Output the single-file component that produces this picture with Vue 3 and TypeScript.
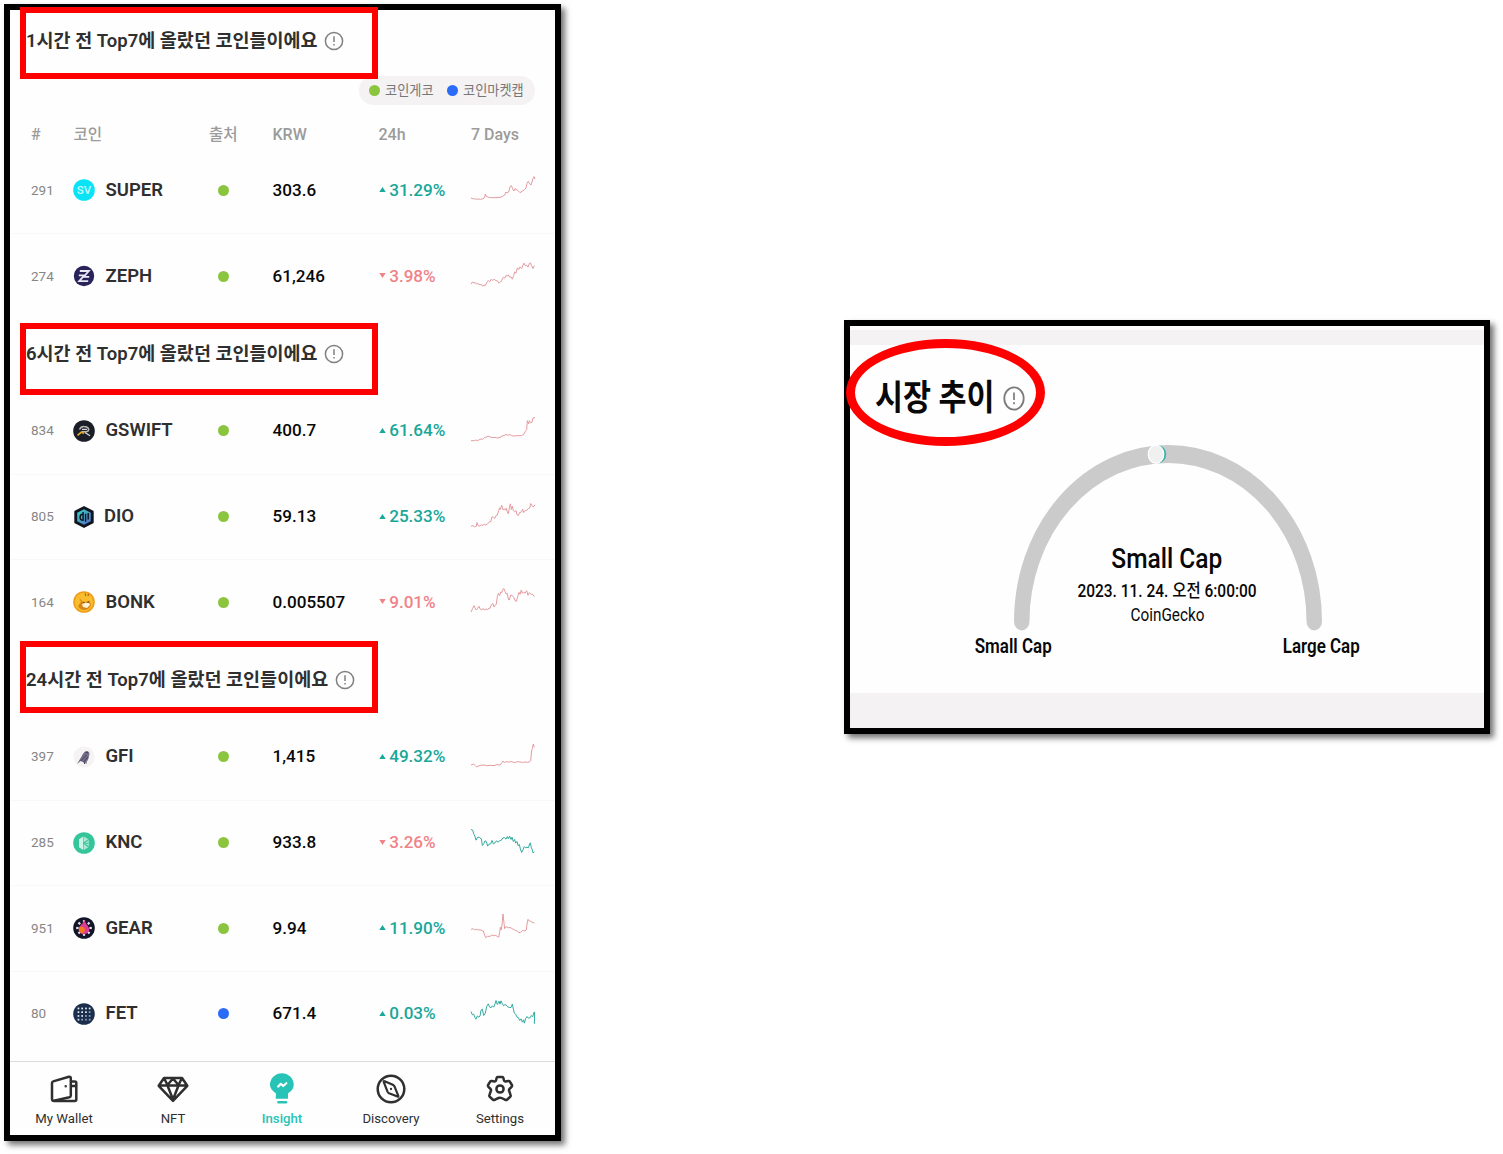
<script setup lang="ts">
interface Coin {
  rank: number
  symbol: string
  source: 'gecko' | 'cmc'
  price: string
  change: string
  up: boolean
  mid: number
  trend: 'red' | 'teal'
  points: string
}
interface Section {
  title: string
  width: number
  legend: boolean
  coins: Coin[]
}

const sections: Section[] = [
  {
    title: '1시간 전 Top7에 올랐던 코인들이에요', width: 291, legend: true,
    coins: [
      { rank: 291, symbol: 'SUPER', source: 'gecko', price: '303.6', change: '31.29%', up: true, mid: 390, trend: 'red',
        points: '393,414 400,417 404,416 410,418 416,417 422,418 429,416 434,413 436,402 439,409 446,412 452,413 465,413 480,412 488,409 494,405 498,396 501,399 506,396 510,380 514,377 519,388 522,393 525,386 528,388 534,392 540,398 546,394 553,389 558,384 561,370 565,364 569,372 573,375 576,366 579,355 582,350 585,357' },
      { rank: 274, symbol: 'ZEPH', source: 'gecko', price: '61,246', change: '3.98%', up: false, mid: 646.5, trend: 'red',
        points: '393,671 398,664 401,668 405,666 410,670 416,670 420,673 424,672 428,677 432,674 436,675 440,667 445,660 449,664 454,656 458,660 462,656 467,660 472,661 476,667 480,666 484,661 490,650 494,653 498,645 502,647 505,643 509,650 513,649 517,656 521,645 524,634 528,638 532,622 536,627 540,619 545,624 549,614 552,608 556,616 560,614 564,620 568,609 571,607 575,616 579,624 583,615' },
    ],
  },
  {
    title: '6시간 전 Top7에 올랐던 코인들이에요', width: 291, legend: false,
    coins: [
      { rank: 834, symbol: 'GSWIFT', source: 'gecko', price: '400.7', change: '61.64%', up: true, mid: 93, trend: 'red',
        points: '393,122 403,122 406,120 412,122 418,119 423,117 428,118 434,112 440,111 444,108 450,111 458,113 465,112 472,114 480,112 486,108 492,107 498,103 503,106 508,104 514,106 520,108 532,107 545,107 552,102 556,94 560,89 562,62 566,72 568,62 572,68 576,67 579,54 585,53' },
      { rank: 805, symbol: 'DIO', source: 'gecko', price: '59.13', change: '25.33%', up: true, mid: 349.5, trend: 'red',
        points: '393,377 400,376 404,379 409,377 411,366 414,375 418,377 424,373 429,375 433,370 437,374 443,370 448,364 452,364 456,349 460,350 464,354 468,345 472,344 476,330 479,322 481,327 485,314 489,328 493,325 496,329 499,323 502,335 505,340 508,322 511,310 514,327 517,317 520,330 524,334 528,330 531,343 535,345 539,336 544,335 548,326 551,336 555,330 560,330 565,324 569,323 572,309 576,316 580,319 585,313' },
      { rank: 164, symbol: 'BONK', source: 'gecko', price: '0.005507', change: '9.01%', up: false, mid: 606, trend: 'red',
        points: '393,636 398,625 402,617 405,624 409,630 413,625 417,619 421,628 425,630 429,625 433,630 438,627 443,629 447,624 450,625 454,614 459,611 462,621 466,616 469,612 472,590 475,580 479,587 482,576 485,578 488,568 492,566 495,574 498,582 502,580 505,598 508,600 512,585 517,587 521,592 525,602 529,604 533,590 537,577 540,583 544,570 547,580 551,576 555,580 560,572 564,586 568,578 573,583 578,583 583,590' },
    ],
  },
  {
    title: '24시간 전 Top7에 올랐던 코인들이에요', width: 302, legend: false,
    coins: [
      { rank: 397, symbol: 'GFI', source: 'gecko', price: '1,415', change: '49.32%', up: true, mid: 81, trend: 'red',
        points: '393,105 401,102 405,106 410,111 414,109 420,106 432,105 440,107 452,106 462,107 470,104 480,105 485,99 489,93 493,98 498,95 505,96 515,95 524,98 532,95 540,96 548,97 555,96 562,97 568,96 572,92 575,62 577,56 580,42 583,52' },
      { rank: 285, symbol: 'KNC', source: 'gecko', price: '933.8', change: '3.26%', up: false, mid: 337.5, trend: 'teal',
        points: '393,297 398,299 402,312 405,318 408,329 412,321 417,320 420,323 424,325 427,345 431,340 435,331 439,333 443,347 447,341 452,340 456,330 460,340 465,337 469,331 474,335 479,331 484,329 489,322 494,322 498,326 502,318 505,325 509,317 513,327 516,320 520,333 524,327 527,338 531,333 534,345 538,342 541,355 545,366 549,358 553,348 557,352 561,350 565,352 569,340 571,337 574,352 577,358 579,367 583,364' },
      { rank: 951, symbol: 'GEAR', source: 'gecko', price: '9.94', change: '11.90%', up: true, mid: 594, trend: 'red',
        points: '393,598 400,596 404,600 410,598 415,600 420,599 426,602 430,603 434,615 437,623 443,619 450,619 455,615 460,617 466,616 472,619 476,622 479,607 481,592 484,600 487,575 489,552 491,570 494,596 498,590 505,593 512,593 518,597 523,599 527,602 532,603 537,608 542,607 548,601 554,603 559,600 561,582 564,568 568,574 572,573 576,577 583,579' },
      { rank: 80, symbol: 'FET', source: 'cmc', price: '671.4', change: '0.03%', up: true, mid: 850.5, trend: 'teal',
        points: '393,843 397,853 401,851 405,861 408,866 412,856 416,860 420,857 423,839 427,836 431,855 436,848 440,828 445,820 449,830 453,832 457,826 461,830 465,820 468,810 472,822 477,812 480,821 483,811 487,820 491,826 495,822 499,824 503,829 508,831 513,831 517,821 520,836 523,848 527,851 531,860 535,861 539,870 543,865 547,875 551,868 553,878 557,864 561,858 565,863 570,862 574,855 578,859 582,845 584,845 583,880' },
    ],
  },
]

const tabs = ['My Wallet', 'NFT', 'Insight', 'Discovery', 'Settings']
const gearDots = [0, 45, 90, 135, 180, 225, 270, 315]
const fetDots = [-5.6, -1.9, 1.9, 5.6]
</script>

<template>
  <div class="page">
    <main class="phone frame">
      <section v-for="s in sections" :key="s.title" class="section">
        <h2 class="section-title" :class="{ first: s.legend }">
          <span :style="{ width: s.width + 'px' }">{{ s.title }}</span>
          <svg class="info" viewBox="0 0 20 20">
            <circle cx="10" cy="10" r="8.6" fill="none" stroke="#808080" stroke-width="1.5" />
            <path d="M10 5.3v5.8M10 13v1.5" stroke="#808080" stroke-width="1.5" />
          </svg>
        </h2>
        <template v-if="s.legend">
          <div class="legend">
            <i class="dot gecko"></i><span class="lg1">코인게코</span>
            <i class="dot cmc"></i><span>코인마켓캡</span>
          </div>
          <div class="row head">
            <span class="c-rank">#</span><span class="c-coin ko">코인</span><span class="c-src ko">출처</span>
            <span class="c-price">KRW</span><span class="c-change">24h</span><span class="c-chart">7 Days</span>
          </div>
        </template>
        <div v-for="c in s.coins" :key="c.symbol" class="row coin">
          <span class="c-rank">{{ c.rank }}</span>
          <span class="c-coin">
            <svg class="logo" viewBox="-11 -11 22 22">
              <template v-if="c.symbol === 'SUPER'">
                <circle r="10.8" fill="#08e4f6" />
                <text x="0" y="4" text-anchor="middle" font-size="11.5" font-weight="500" fill="#c4fbff">SV</text>
              </template>
              <template v-else-if="c.symbol === 'ZEPH'">
                <circle r="10.2" fill="#28245a" />
                <path d="M-4.2-5H4.8L1-.7H-5.2M5.2.9H-1L-4.8 5.2H4.2" fill="none" stroke="#e9e8f3" stroke-width="1.8" />
              </template>
              <template v-else-if="c.symbol === 'GSWIFT'">
                <circle r="10.8" fill="#1b1e27" />
                <path d="M-4.5-1.5Q-3-4.7 0-4.5Q4.5-4.3 4.7-1.2Q4.6.5 2.5.8H-2" fill="none" stroke="#b9b9b6" stroke-width="1.6" />
                <path d="M-6.5 4.4L-2.5 1L0 2.6" fill="none" stroke="#e3a52a" stroke-width="1.8" />
                <path d="M-2-1.7H3M1 1.5L6 4.8" stroke="#d6d6d6" stroke-width="1.3" />
              </template>
              <template v-else-if="c.symbol === 'DIO'">
                <defs>
                  <linearGradient id="dio" x1="0" y1="0" x2="1" y2="1">
                    <stop offset="0" stop-color="#32d5c4" /><stop offset="1" stop-color="#5a68c8" />
                  </linearGradient>
                </defs>
                <path d="M0-10L8.8-5.5V5.5L0 10L-8.8 5.5V-5.5Z" fill="#11151e" stroke="#11151e" stroke-width="1.8" stroke-linejoin="round" />
                <path d="M0-7.8L6.8-4.3V4.3L0 7.8L-6.8 4.3V-4.3Z" fill="url(#dio)" />
                <path d="M-.9-5V3.4Q-4 3.4-3.9 0Q-3.8-2.8-1-2.8M1.6-3.3V4.8M4.2-4V2.6" fill="none" stroke="#0d131c" stroke-width="1.4" />
              </template>
              <template v-else-if="c.symbol === 'BONK'">
                <circle r="10.8" fill="#ef9c18" />
                <circle r="9.2" fill="#f8bd2e" />
                <path d="M-5-4.5L-3 0L-6 4Q-4 8 0 8Q5 8 7 3L5.5-1.5L2 0L-1.5-.5Z" fill="#d98512" />
                <path d="M-2 2.2L1 .8L5 1L6 3L3 6L-1 5Z" fill="#fff3d7" />
                <path d="M-1 .5H.6M3.4 .2H5" stroke="#7b470e" stroke-width="1.2" />
                <path d="M1-8.5L2-6M4.5-8L4-6" stroke="#a8620f" stroke-width="1.1" />
              </template>
              <template v-else-if="c.symbol === 'GFI'">
                <circle r="10.6" fill="#f5f3f3" />
                <path d="M-7 7L-2.5-.5Q-1-4 .5-5Q3-7 5-4.8L5.5-3.5L4.6 1Q3.8 5 0 5.8L-3.2 4Z" fill="#756e88" />
                <path d="M-3.5 4L2.5-2M-.5 5L4 0M1.5-4.4H4M.5 5.2V7M2 4.5V6.6" stroke="#463f58" stroke-width="1" />
              </template>
              <template v-else-if="c.symbol === 'KNC'">
                <circle r="10.8" fill="#36c59a" />
                <path d="M-5-3.7L-.8-6.5V6.9L-5 4.2Z" fill="#c9f4e7" />
                <path d="M-.2-6.5L4.8-3.6V4L-.2 6.9Z" fill="#a9e9d6" />
                <path d="M4.8-3.6L-.4.2L4.8 4M4.5.2H1.5" fill="none" stroke="#36c59a" stroke-width="1.1" />
              </template>
              <template v-else-if="c.symbol === 'GEAR'">
                <circle r="10.8" fill="#12142a" />
                <rect v-for="a in gearDots" :key="a" x="-1.1" y="-7.8" width="2.2" height="2.4" fill="#e9e4e9" :transform="`rotate(${a})`" />
                <path d="M.3-8.2Q1.5-4 4-1.8Q7 3 2.5 5.5Q-2 7.5-4.5 4Q-6.5 0-3-3Q-.5-5 .3-8.2" fill="#dc3c91" />
                <path d="M-4.5-1Q0-3 1 2Q0 5-2 5.5Q-7 3-4.5-1" fill="#f47a20" />
              </template>
              <template v-else>
                <circle r="10.8" fill="#1b2f4d" />
                <template v-for="y in fetDots" :key="y">
                  <rect v-for="x in fetDots" :key="x" :x="x - 0.8" :y="y - 0.8" width="1.7" height="1.7" :fill="x + y < 1 ? '#e6edf5' : '#93a5ba'" />
                </template>
              </template>
            </svg>
            <b :class="{ tight: c.symbol === 'DIO' }">{{ c.symbol }}</b>
          </span>
          <span class="c-src"><i class="dot" :class="c.source"></i></span>
          <span class="c-price">{{ c.price }}</span>
          <span class="c-change" :class="c.up ? 'up' : 'down'">
            <svg viewBox="0 0 7 5"><path :d="c.up ? 'M.3 5L3.5 0L6.7 5Z' : 'M.3 0H6.7L3.5 5Z'" fill="currentColor" /></svg>{{ c.change }}
          </span>
          <svg class="c-chart" :viewBox="`393 ${c.mid - 45} 195 90`">
            <polyline :points="c.points" fill="none" :stroke="c.trend === 'red' ? '#e2979d' : '#2ba79b'" stroke-width="2.9" stroke-linejoin="round" />
          </svg>
        </div>
      </section>
      <nav class="tabs">
        <div v-for="t in tabs" :key="t" class="tab" :class="{ active: t === 'Insight' }">
          <svg viewBox="-17 -17 34 34" fill="none" stroke="currentColor" stroke-width="2.5" stroke-linejoin="round" stroke-linecap="round">
            <template v-if="t === 'My Wallet'">
              <path d="M-10.8-7.6L5-12.3Q6.8-12.7 6.8-10.8V6.5Q6.8 7.9 5.4 8.3L-10 11.8Q-12 12-12 10V-6Q-12-7.3-10.8-7.6Z" />
              <path d="M7.2-7.5H10.8Q12.3-7.5 12.3-6V10.5Q12.3 12 10.8 12H-10M7.2-3H12" />
              <circle cx="1.7" cy="-2.7" r=".5" stroke-width="1.5" />
            </template>
            <template v-else-if="t === 'NFT'">
              <path d="M-9-11H9L14.3-3.2L0 11.8L-14.3-3.2ZM-14-3.5H14M-5.5-3.5L0 10.5L5.5-3.5M-9-11L-5.5-4L0-10.5L5.5-4L9-11" stroke-width="2.5" />
            </template>
            <template v-else-if="t === 'Insight'">
              <path d="M-6.3 9.7L-6 4.5C-9.5 2-12-.8-12-4A11.7 11.7 0 0 1 11.7-4C11.7-.5 9.5 2 6 4.5L6 9.7Z" fill="currentColor" stroke="none" />
              <path d="M-3.5 13.2H4" stroke-width="2.5" />
              <path d="M-3.8-2.4L-1.2-5.2L1.2-3L4.3-5.8" stroke="#fff" stroke-width="2.2" />
            </template>
            <template v-else-if="t === 'Discovery'">
              <circle r="13.3" />
              <path d="M-7.3-7.2Q-7.5-8.3-6.3-7.8L1.8-4.3Q3-3.7 3.5-2.6L7.3 6.9Q7.6 8 6.5 7.6L-2 4.2Q-3 3.7-3.5 2.6Z" stroke-width="2.2" />
              <circle r=".5" stroke-width="1.3" />
            </template>
            <template v-else>
              <path d="M-2.2-12H2.2Q3.2-12 3.4-11L3.9-8.7Q4.2-7.4 5.5-7.6L8.3-8Q9.4-8.1 10-7.2L11.9-4Q12.4-3 11.6-2.2L9.4 0Q8.6 1 9.2 2L10.6 6.2Q11 7.3 10 8L7 10.7Q6 11.4 5 10.7L1.5 9Q0 8.3-1.5 9L-5 10.7Q-6 11.4-7 10.7L-10 8Q-11 7.3-10.6 6.2L-9.2 2Q-8.6 1-9.4 0L-11.6-2.2Q-12.4-3-11.9-4L-10-7.2Q-9.4-8.1-8.3-8L-5.5-7.6Q-4.2-7.4-3.9-8.7L-3.4-11Q-3.2-12-2.2-12Z" />
              <circle r="3.6" />
            </template>
          </svg>
          <span>{{ t }}</span>
        </div>
      </nav>
      <div class="mark m1"></div>
      <div class="mark m2"></div>
      <div class="mark m3"></div>
    </main>

    <aside class="market frame">
      <div class="strip top"></div>
      <div class="market-body">
        <h1>
          <span class="sq">시장 추이</span>
          <svg viewBox="0 0 22 25" preserveAspectRatio="none">
            <ellipse cx="11" cy="12.5" rx="9.7" ry="11.2" fill="none" stroke="#7b7b7b" stroke-width="1.8" />
            <path d="M11 6.5v7.5M11 16.3v2" stroke="#7b7b7b" stroke-width="1.7" />
          </svg>
        </h1>
        <div class="gauge">
          <svg viewBox="0 0 354 186" preserveAspectRatio="none">
            <path d="M8.9 176.5A168.1 167.5 0 0 1 345.1 176.5" fill="none" stroke="#cbcbcb" stroke-width="17.8" stroke-linecap="round" />
            <circle cx="166" cy="9.2" r="8.9" fill="#35b5a8" />
            <circle cx="163.2" cy="9.3" r="9" fill="#f0f0f0" stroke="#fff" stroke-width="1.3" />
          </svg>
          <div class="reading">
            <p class="value"><span class="sq">Small Cap</span></p>
            <p class="date"><span class="sq">2023. 11. 24. 오전 6:00:00</span></p>
            <p class="from"><span class="sq">CoinGecko</span></p>
          </div>
        </div>
        <div class="ends">
          <span><span class="sq">Small Cap</span></span>
          <span><span class="sq">Large Cap</span></span>
        </div>
      </div>
      <div class="strip bottom"></div>
      <div class="ring"></div>
    </aside>
  </div>
</template>

<style>
body { background: #fff; }
</style>

<style scoped>
* { box-sizing: border-box; }
.page {
  display: flex;
  align-items: flex-start;
  width: 1503px;
  height: 1154px;
  padding: 4px 0 0 4px;
  overflow: hidden;
  font-family: Roboto, "Noto Sans CJK KR", sans-serif;
  color: #2f2f2f;
}
.frame {
  position: relative;
  flex: none;
  border: 6px solid #000;
  background: #fefefe;
  box-shadow: 4px 4px 6px rgba(0, 0, 0, .55);
}
h1, h2, p { margin: 0; }
.phone {
  width: 557px;
  height: 1137px;
  display: flex;
  flex-direction: column;
}
.section-title {
  display: flex;
  align-items: center;
  height: 69.5px;
  padding: 1px 0 0 16px;
  font-size: 18.5px;
  font-weight: 600;
  line-height: 24px;
  white-space: nowrap;
}
.section-title.first { height: 66px; padding-bottom: 5px; }
.info { width: 20px; height: 20px; margin-left: 7px; }
.legend {
  display: flex;
  align-items: center;
  width: 176px;
  height: 29px;
  margin-left: 349px;
  padding-left: 10px;
  border-radius: 15px;
  background: #f4f2f3;
  color: #777;
  font-size: 13.2px;
  white-space: nowrap;
}
.legend span { padding-bottom: 2px; }
.legend .dot { margin-right: 5px; }
.legend .lg1 { width: 50px; margin-right: 12px; }
.dot { display: block; flex: none; width: 11px; height: 11px; border-radius: 50%; }
.gecko { background: #8bc53f; }
.cmc { background: #2a6bf8; }
.row { display: flex; align-items: center; padding-left: 21px; }
.head {
  height: 42.7px;
  padding-top: 16px;
  font-size: 16px;
  font-weight: 500;
  color: #9b9b9b;
}
.head .ko { font-size: 15.6px; padding-bottom: 3px; }
.coin { height: 85.5px; }
.coin + .coin { border-top: 1.5px solid #f8f8f8; }
.row > * { flex: none; }
.c-rank { width: 42.5px; }
.c-coin { width: 135.5px; display: flex; align-items: center; }
.c-src { width: 63.5px; }
.c-price { width: 106px; }
.c-change { width: 92.5px; }
.coin .c-rank { font-size: 13.5px; color: #868686; padding-bottom: 1px; }
.logo { width: 22px; height: 22px; margin: 0 11px 0 -1px; }
.coin b { font-size: 18.5px; font-weight: 600; padding-bottom: 1px; }
.coin b.tight { margin-left: -1.5px; }
.coin .c-src { padding-left: 8.5px; }
.coin .c-price { font-size: 17.1px; font-weight: 500; color: #080808; padding-bottom: 1px; }
.coin .c-change { display: flex; align-items: center; font-size: 17.1px; font-weight: 500; padding-bottom: 1px; }
.c-change svg { width: 7px; height: 5px; margin-right: 3.7px; }
.up { color: #18a798; }
.down { color: #f08288; }
.coin .c-chart { width: 65px; height: 30px; overflow: visible; }
.tabs {
  display: flex;
  height: 74px;
  margin-top: auto;
  border-top: 1.5px solid #dcdcdc;
}
.tab {
  flex: 1;
  display: flex;
  flex-direction: column;
  align-items: center;
  padding: 10px 1px 0 0;
  font-size: 13.2px;
  line-height: 18px;
}
.tab svg { width: 34px; height: 34px; margin-bottom: 4px; }
.tab.active { color: #27c3b6; font-weight: 500; }
.mark {
  position: absolute;
  left: 10px;
  width: 358px;
  height: 72px;
  border: 6px solid #f00;
}
.m1 { top: -3px; }
.m2 { top: 313px; }
.m3 { top: 631px; }

.market {
  display: flex;
  flex-direction: column;
  width: 646px;
  height: 414px;
  margin: 316px 0 0 283px;
  color: #080808;
}
.strip { background: #f4f2f3; }
.strip.top { height: 15px; margin-top: 4px; }
.strip.bottom { height: 35px; }
.market-body { flex: 1; }
.sq { display: inline-block; transform: scaleX(.87); white-space: nowrap; }
.market h1 {
  display: flex;
  align-items: center;
  height: 100px;
  padding-left: 25px;
  font-size: 35px;
  line-height: 40px;
  font-weight: 700;
}
.market h1 .sq { width: 128px; padding-top: 8px; transform-origin: left; }
.market h1 svg { width: 22px; height: 25px; margin-top: 6px; }
.gauge { display: grid; justify-content: center; }
.gauge > * { grid-area: 1 / 1; }
.gauge svg { width: 308px; height: 186px; margin-left: 1px; }
.reading { padding-top: 96px; text-align: center; }
.value { font-size: 28.2px; line-height: 36px; font-weight: 500; }
.date { font-size: 17.8px; line-height: 27px; font-weight: 500; }
.from { font-size: 17.6px; line-height: 23px; }
.ends {
  display: flex;
  justify-content: space-between;
  padding: 4px 97px 0 97px;
  font-size: 19.5px;
  line-height: 24px;
  font-weight: 600;
}
.ends > span { display: flex; justify-content: center; width: 132px; }
.ring {
  position: absolute;
  left: -4px;
  top: 13px;
  width: 199px;
  height: 107px;
  border: 9px solid #f00;
  border-radius: 50%;
}
</style>
